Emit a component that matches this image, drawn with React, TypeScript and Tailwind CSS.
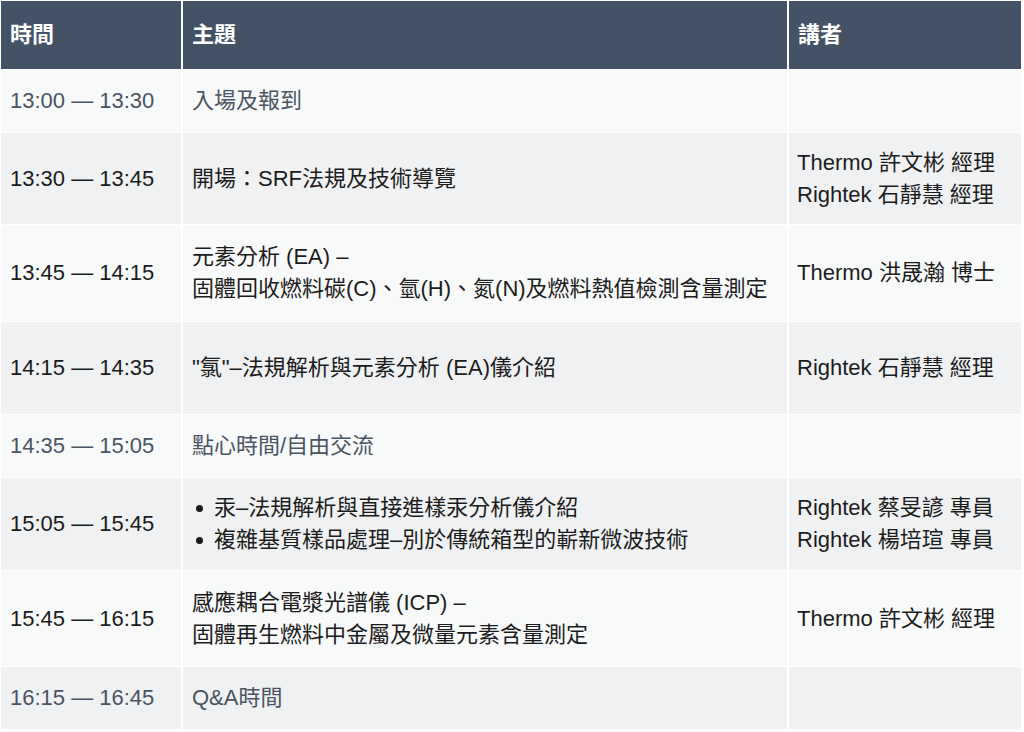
import React from 'react';

interface Session {
  time: string;
  topic: React.ReactNode;
  speakers?: string[];
  muted?: boolean;
  height: string;
}

const sessions: Session[] = [
  { time: '13:00 — 13:30', topic: '入場及報到', muted: true, height: 'h-[62px]' },
  {
    time: '13:30 — 13:45',
    topic: '開場：SRF法規及技術導覽',
    speakers: ['Thermo 許文彬 經理', 'Rightek 石靜慧 經理'],
    height: 'h-[91px]',
  },
  {
    time: '13:45 — 14:15',
    topic: (
      <>
        <div>元素分析 (EA) –</div>
        <div>固體回收燃料碳(C)、氫(H)、氮(N)及燃料熱值檢測含量測定</div>
      </>
    ),
    speakers: ['Thermo 洪晟瀚 博士'],
    height: 'h-[96px]',
  },
  {
    time: '14:15 — 14:35',
    topic: '"氯"–法規解析與元素分析 (EA)儀介紹',
    speakers: ['Rightek 石靜慧 經理'],
    height: 'h-[92px]',
  },
  { time: '14:35 — 15:05', topic: '點心時間/自由交流', muted: true, height: 'h-[62px]' },
  {
    time: '15:05 — 15:45',
    topic: (
      <ul>
        {['汞–法規解析與直接進樣汞分析儀介紹', '複雜基質樣品處理–別於傳統箱型的嶄新微波技術'].map((item) => (
          <li key={item} className="flex items-center">
            <span className="ml-[4px] mr-[11px] h-[7px] w-[7px] rounded-full bg-[#1c1c1c]" />
            {item}
          </li>
        ))}
      </ul>
    ),
    speakers: ['Rightek 蔡旻諺 專員', 'Rightek 楊培瑄 專員'],
    height: 'h-[92px]',
  },
  {
    time: '15:45 — 16:15',
    topic: (
      <>
        <div>感應耦合電漿光譜儀 (ICP) –</div>
        <div>固體再生燃料中金屬及微量元素含量測定</div>
      </>
    ),
    speakers: ['Thermo 許文彬 經理'],
    height: 'h-[95px]',
  },
  { time: '16:15 — 16:45', topic: 'Q&A時間', muted: true, height: 'h-[62px]' },
];

const cell = 'flex flex-col justify-center px-[9px]';

export default function App() {
  return (
    <div className="h-[732px] w-[1024px] bg-white pl-px pt-px font-['Liberation_Sans','Noto_Sans_CJK_TC',sans-serif] text-[22px] leading-[32px]">
      <div className="flex w-[1020px] flex-col gap-px">
        <div className="grid h-[68px] grid-cols-[180px_604px_232px] gap-[2px] font-bold text-white">
          <div className={`${cell} bg-[#435365]`}>時間</div>
          <div className={`${cell} bg-[#435365]`}>主題</div>
          <div className={`${cell} bg-[#435365]`}>講者</div>
        </div>
        {sessions.map((s, i) => {
          const bg = i % 2 === 0 ? 'bg-[#f8f9f9]' : 'bg-[#eff1f2]';
          const text = s.muted ? 'text-[#4a5462]' : 'text-[#1c1c1c]';
          return (
            <div key={s.time} className={`grid ${s.height} grid-cols-[180px_604px_232px] gap-[2px] ${text}`}>
              <div className={`${cell} ${bg}`}>{s.time}</div>
              <div className={`${cell} ${bg}`}>{s.topic}</div>
              <div className={`${cell} ${bg} pl-[8px]`}>
                {s.speakers?.map((p) => (
                  <div key={p}>{p}</div>
                ))}
              </div>
            </div>
          );
        })}
      </div>
    </div>
  );
}
